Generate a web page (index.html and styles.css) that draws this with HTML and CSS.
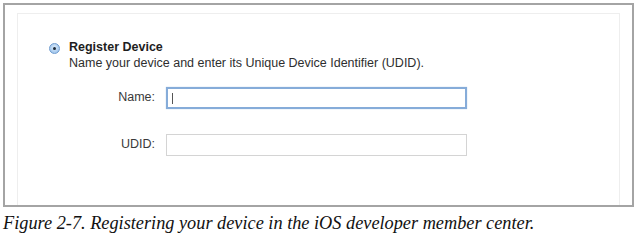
FILE: index.html
```html
<!DOCTYPE html>
<html lang="en">
<head>
    <meta charset="UTF-8">
    <title>Register Device</title>
    <link rel="stylesheet" href="styles.css">
</head>
<body>
    <!-- moldura da figura com o painel de cadastro -->
    <div class="figure">
        <div class="panel">
            <div class="option">
                <span class="radio"><span class="dot"></span></span>
                <div class="option-text">
                    <div class="title">Register Device</div>
                    <div class="desc">Name your device and enter its Unique Device Identifier (UDID).</div>
                </div>
            </div>
            <div class="fields">
                <label class="label">Name:</label>
                <div class="field focused"><span class="caret"></span></div>
                <label class="label">UDID:</label>
                <div class="field"></div>
            </div>
        </div>
    </div>
    <p class="caption">Figure 2-7. Registering your device in the iOS developer member center.</p>
</body>
</html>
```

FILE: styles.css
```css
body{
    margin: 0;
    background: #fff;
    font-family: "Liberation Sans", Arial, sans-serif;
}
.figure{
    margin: 3px 0 0 3px;
    width: 631px;
    height: 204px;
    box-sizing: border-box;
    border: 2px solid #a4a4a4;
    padding: 8px 12px 0 12px;
}
.panel{
    height: 100%;
    box-sizing: border-box;
    border: 1px solid #eeeeee;
    border-bottom: none;
    padding: 25px 0 0 31px;
}
.option{
    display: flex;
    gap: 9px;
}
.radio{
    width: 9px;
    height: 9px;
    margin-top: 4px;
    border-radius: 50%;
    border: 1px solid #6f9cd0;
    background: radial-gradient(circle at 50% 40%, #dcebfa, #8fbbe8);
    display: flex;
    align-items: center;
    justify-content: center;
    box-sizing: content-box;
}
.dot{
    width: 3px;
    height: 3px;
    border-radius: 50%;
    background: #1d2a3a;
}
.title{
    font-weight: bold;
    font-size: 12.5px;
    line-height: 16px;
    color: #1e1e1e;
}
.desc{
    font-size: 12.5px;
    line-height: 17px;
    color: #2e2e2e;
}
.fields{
    display: grid;
    grid-template-columns: 87px 301px;
    column-gap: 11px;
    row-gap: 25px;
    margin: 15px 0 0 19px;
    align-items: center;
}
.label{
    text-align: right;
    font-size: 12.5px;
    color: #3a3a3a;
    padding-bottom: 3px;
}
.field{
    height: 22px;
    box-sizing: border-box;
    border: 1px solid #d4d4d4;
    background: #fff;
    display: flex;
    align-items: center;
    padding-left: 5px;
}
.field.focused{
    border: 2px solid #86acd9;
    box-shadow: 0 0 1px #a9c6e8;
    padding-left: 4px;
}
.caret{
    width: 1px;
    height: 11px;
    background: #555;
}
.caption{
    margin: 5px 0 0 3px;
    font-family: "Liberation Serif", "Times New Roman", serif;
    font-style: italic;
    font-size: 18.3px;
    line-height: 22px;
    color: #111;
}
```
